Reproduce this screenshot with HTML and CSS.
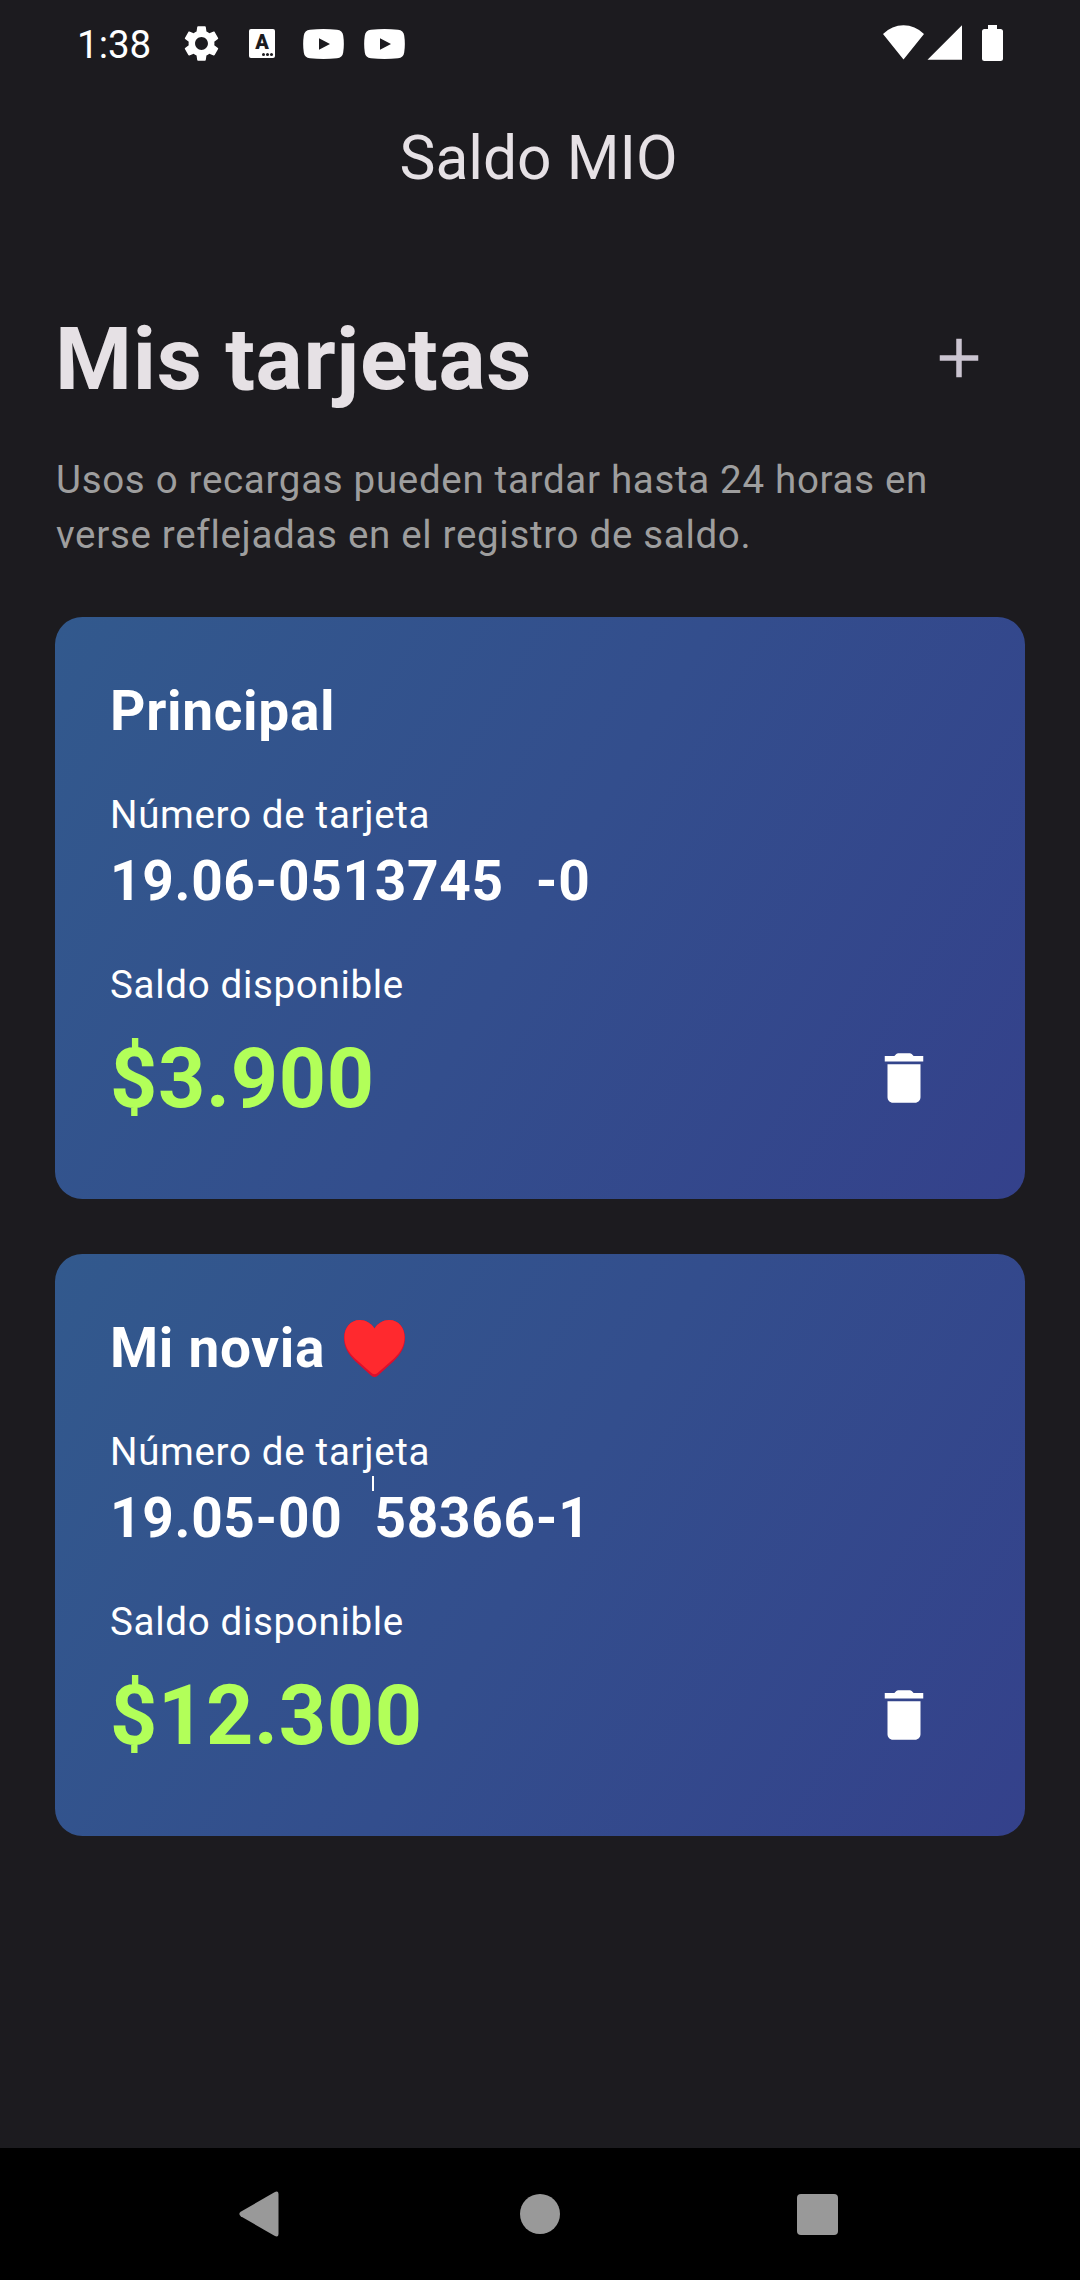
FILE: index.html
```html
<!DOCTYPE html>
<html lang="es">
<head>
<meta charset="utf-8">
<title>Saldo MIO</title>
<link rel="stylesheet" href="styles.css">
</head>
<body>
<div class="screen">
  <div class="status-bar">
    <span class="clock">1:38</span>
    <svg class="gear" viewBox="0 0 24 24"><path d="M19.14 12.94c.04-.3.06-.61.06-.94 0-.32-.02-.64-.07-.94l2.03-1.58c.18-.14.23-.41.12-.61l-1.92-3.32c-.12-.22-.37-.29-.59-.22l-2.39.96c-.5-.38-1.03-.7-1.62-.94l-.36-2.54c-.04-.24-.24-.41-.48-.41h-3.84c-.24 0-.43.17-.47.41l-.36 2.54c-.59.24-1.13.57-1.62.94l-2.39-.96c-.22-.08-.47 0-.59.22L2.74 8.87c-.12.21-.08.47.12.61l2.03 1.58c-.05.3-.09.63-.09.94s.02.64.07.94l-2.03 1.58c-.18.14-.23.41-.12.61l1.92 3.32c.12.22.37.29.59.22l2.39-.96c.5.38 1.03.7 1.62.94l.36 2.54c.05.24.24.41.48.41h3.84c.24 0 .44-.17.47-.41l.36-2.54c.59-.24 1.13-.56 1.62-.94l2.39.96c.22.08.47 0 .59-.22l1.92-3.32c.12-.22.07-.47-.12-.61l-2.01-1.58zM12 15.6c-1.98 0-3.6-1.62-3.6-3.6s1.62-3.6 3.6-3.6 3.6 1.62 3.6 3.6-1.62 3.6-3.6 3.6z"/></svg>
    <span class="keyboard">A<i></i></span>
    <svg class="video" viewBox="0 0 41 30"><path fill-rule="evenodd" d="M7 .7Q20.500-.7 34 .7Q39.500 1.200 40.200 6.500Q41.500 15 40.200 23.500Q39.500 28.800 34 29.300Q20.500 30.500 7 29.300Q1.500 28.800.8 23.500Q-.5 15 .8 6.500Q1.500 1.200 7 .7zM16 9.300V20.700L27 15z"/></svg>
    <svg class="video" viewBox="0 0 41 30"><path fill-rule="evenodd" d="M7 .7Q20.500-.7 34 .7Q39.500 1.200 40.200 6.500Q41.500 15 40.200 23.500Q39.500 28.800 34 29.300Q20.500 30.500 7 29.300Q1.500 28.800.8 23.500Q-.5 15 .8 6.500Q1.500 1.200 7 .7zM16 9.300V20.700L27 15z"/></svg>
    <svg class="system" viewBox="0 0 120 36"><path d="M20.500 34.500L0 9Q9 .3 20.500.3T41 9zM44.500 34.700L79 0.300V34.700zM105 0h9v4h3.500q2.500 0 2.500 2.500v27q0 2.500-2.500 2.500h-16q-2.500 0-2.500-2.500v-27q0-2.500 2.500-2.500h3.500z"/></svg>
  </div>

  <header class="app-bar">Saldo MIO</header>

  <main class="content">
    <div class="heading-row">
      <h1 class="heading">Mis tarjetas</h1>
      <button class="icon-button add" aria-label="Agregar"><svg viewBox="0 0 24 24"><path d="M19 13h-6v6h-2v-6H5v-2h6V5h2v6h6v2z"/></svg></button>
    </div>
    <p class="notice">Usos o recargas pueden tardar hasta 24 horas en verse reflejadas en el registro de saldo.</p>

    <div class="cards">
      <section class="card">
        <h2 class="card-name">Principal</h2>
        <div class="label">Número de tarjeta</div>
        <div class="number">19.06-0513745  -0</div>
        <div class="label balance-label">Saldo disponible</div>
        <div class="balance-row">
          <span class="balance">$3.900</span>
          <button class="icon-button" aria-label="Eliminar"><svg viewBox="0 0 24 24"><path d="M6 19c0 1.100.9 2 2 2h8c1.100 0 2-.9 2-2V7H6v12zM19 4h-3.500l-.7-.7q-.3-.3-.7-.3H9.900q-.4 0-.7.300L8.500 4H5v2h14V4z"/></svg></button>
        </div>
      </section>
      <section class="card">
        <h2 class="card-name">Mi novia <svg class="heart" viewBox="0 0 61 57"><path class="heart-shade" d="M30.500 8.500C27 3 21.500 0 16 0C6 0 0 8 0 18C0 27 4 34 11 41L27 55.500Q30.500 58.500 34 55.500L50 41C57 34 61 27 61 18C61 8 55 0 45 0C39.500 0 34 3 30.500 8.500z"/><path class="heart-face" d="M30.500 8.500C27 3 21.500 0 16 0C6 0 .5 8 .5 17C.5 26 4.500 32 11 38.500L27.500 53Q30.500 55.500 33.500 53L50 38.500C56.500 32 60.500 26 60.500 17C60.500 8 55 0 45 0C39.500 0 34 3 30.500 8.500z"/></svg></h2>
        <div class="label">Número de tarjeta</div>
        <div class="number">19.05-00  58366-1<i class="caret"></i></div>
        <div class="label balance-label">Saldo disponible</div>
        <div class="balance-row">
          <span class="balance">$12.300</span>
          <button class="icon-button" aria-label="Eliminar"><svg viewBox="0 0 24 24"><path d="M6 19c0 1.100.9 2 2 2h8c1.100 0 2-.9 2-2V7H6v12zM19 4h-3.500l-.7-.7q-.3-.3-.7-.3H9.900q-.4 0-.7.300L8.500 4H5v2h14V4z"/></svg></button>
        </div>
      </section>
    </div>
  </main>

  <nav class="nav-bar">
    <svg class="nav-back" viewBox="0 0 40 46"><path d="M35.500 1.200Q39.500-1 39.500 3.500V42.500Q39.500 47 35.500 44.800L1.700 25.200Q-1 23 1.700 20.800z"/></svg>
    <span class="nav-home"></span>
    <span class="nav-recent"></span>
  </nav>
</div>
</body>
</html>
```

FILE: styles.css
```css
* {
  box-sizing: border-box;
}

body {
  margin: 0;
  background: #1c1b1f;
  color: #e6e1e5;
  font-family: Roboto, "Noto Sans", sans-serif;
}

.screen {
  display: flex;
  flex-direction: column;
  width: 1080px;
  height: 2280px;
  overflow: hidden;
}

svg {
  display: block;
  fill: currentColor;
}

/* Status bar */
.status-bar {
  display: flex;
  align-items: center;
  height: 80px;
  padding: 7px 77px 0 77px;
  color: #fff;
}

.clock {
  width: 103px;
  padding-top: 2px;
  font-size: 38.500px;
  line-height: 46px;
}

.gear {
  width: 43px;
  height: 43px;
}

.keyboard {
  position: relative;
  width: 26px;
  height: 29px;
  margin-left: 26px;
  border-radius: 2px;
  background: #fff;
  color: #1c1b1f;
  font-size: 20px;
  font-weight: 900;
  line-height: 27px;
  text-align: center;
}

.keyboard i {
  position: absolute;
  right: 10px;
  bottom: 2px;
  width: 3px;
  height: 3px;
  border-radius: 50%;
  background: #1c1b1f;
  box-shadow: 4px 0 #1c1b1f, 8px 0 #1c1b1f;
}

.video {
  width: 41px;
  height: 30px;
  margin-left: 28px;
}

.video + .video {
  margin-left: 20px;
}

.system {
  width: 120px;
  height: 36px;
  margin: 0 0 2px auto;
}

/* App bar */
.app-bar {
  height: 157px;
  padding-right: 3px;
  font-size: 60.500px;
  line-height: 157px;
  text-align: center;
}

/* Content */
.content {
  flex: 1;
  padding: 55px 55px 0;
  letter-spacing: 0.6875px;
}

.heading-row,
.balance-row {
  display: flex;
  align-items: center;
  justify-content: space-between;
  height: 132px;
}

.heading {
  margin: 0;
  font-size: 88px;
  font-weight: 700;
}

.icon-button {
  display: grid;
  place-items: center;
  width: 132px;
  height: 132px;
  padding: 0;
  border: 0;
  background: none;
  color: #fff;
}

.icon-button svg {
  width: 66px;
  height: 66px;
}

.add {
  color: #cac4d0;
}

.notice {
  margin: 27.500px 0 55px;
  padding-left: 1px;
  color: #9e9e9e;
  font-size: 38.500px;
  line-height: 55px;
}

.cards {
  display: flex;
  flex-direction: column;
  gap: 55px;
}

.card {
  height: 582px;
  padding: 55px;
  border-radius: 27.500px;
  background: linear-gradient(120.960deg, #32598d, #334e8d 50%, #34418b);
  color: #fff;
}

.card-name,
.number {
  display: flex;
  align-items: center;
  margin: 0;
  font-size: 55px;
  font-weight: 700;
  line-height: 78.500px;
  white-space: pre;
}

.card-name {
  height: 78.500px;
  margin-bottom: 36.500px;
}

.heart {
  width: 61px;
  height: 57px;
  margin: 1px 0 0 4px;
}

.heart-shade {
  fill: #dd0f2c;
}

.heart-face {
  fill: #ff292e;
}

.label {
  font-size: 38.500px;
  line-height: 55px;
}

.number {
  position: relative;
  word-spacing: 1.700px;
}

.caret {
  position: absolute;
  left: 262px;
  top: -3px;
  width: 2px;
  height: 15px;
  background: #fff;
}

.balance-label {
  margin-top: 36.500px;
}

.balance {
  padding-top: 2px;
  color: #b2ff59;
  font-size: 82.500px;
  font-weight: 700;
}

/* System navigation */
.nav-bar {
  display: grid;
  grid-template-columns: 1fr auto 1fr;
  align-items: center;
  height: 132px;
  padding: 0 242px 0 239px;
  background: #000;
  color: #999;
}

.nav-back {
  width: 40px;
  height: 46px;
}

.nav-home {
  width: 40px;
  height: 40px;
  margin: 0 -1.500px 0 1.500px;
  border-radius: 50%;
  background: #999;
}

.nav-recent {
  width: 41px;
  height: 41px;
  justify-self: end;
  border-radius: 4px;
  background: #999;
}
```
